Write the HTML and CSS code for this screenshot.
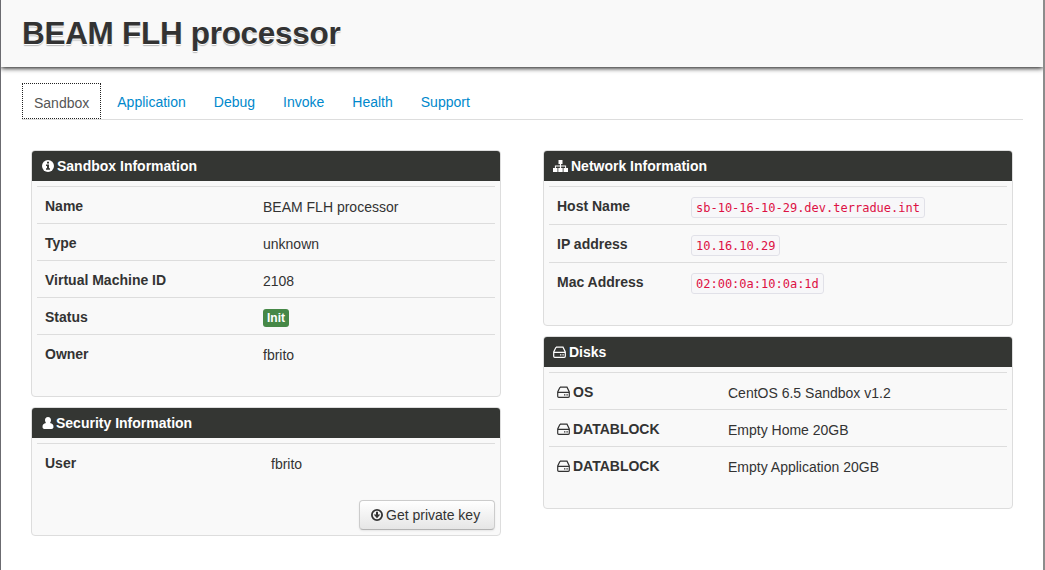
FILE: index.html
```html
<!DOCTYPE html>
<html lang="en">
<head>
<meta charset="utf-8">
<title>BEAM FLH processor</title>
<link rel="stylesheet" href="styles.css">
</head>
<body>
<svg class="sprite" aria-hidden="true">
  <symbol id="hdd" viewBox="0 0 13 12"><path d="M3 1.2h7L12.3 6v4.3a1 1 0 0 1-1 1H1.7a1 1 0 0 1-1-1V6L3 1.2M.9 6.3h11.2" fill="none" stroke="currentColor" stroke-width="1.2"/><path d="M7 8.2h1.4v1.4H7zM9.4 8.2h1.4v1.4H9.4z" fill="currentColor"/></symbol>
</svg>
<div class="page">
  <header class="header"><h1 class="title"><span class="t-title">BEAM FLH processor</span></h1></header>
  <main class="content">
    <nav class="tabs">
      <a class="tab active">Sandbox</a><a class="tab">Application</a><a class="tab">Debug</a><a class="tab">Invoke</a><a class="tab">Health</a><a class="tab">Support</a>
    </nav>
    <div class="columns">
      <div class="column">
        <section class="panel sandbox">
          <h2 class="panel-head"><svg class="icon info" viewBox="0 0 12 12"><circle cx="6" cy="6" r="6" fill="currentColor"/><path d="M5 1.8h2v1.7H5zM4 4.6h3v3.7h1v1.4H4V8.3h1V6H4z" fill="#343633"/></svg>Sandbox Information</h2>
          <dl class="rows">
            <div class="row"><dt>Name</dt><dd>BEAM FLH processor</dd></div>
            <div class="row"><dt>Type</dt><dd>unknown</dd></div>
            <div class="row"><dt>Virtual Machine ID</dt><dd>2108</dd></div>
            <div class="row"><dt>Status</dt><dd><span class="label">Init</span></dd></div>
            <div class="row"><dt>Owner</dt><dd>fbrito</dd></div>
          </dl>
        </section>
        <section class="panel security">
          <h2 class="panel-head"><svg class="icon user" viewBox="0 0 11 12"><path d="M5.5 0C7.5 0 8.6 1.4 8.5 3.3 8.4 4.6 7.9 5.4 7.5 6 9.8 6.3 11 7.5 11 10c0 1.3-.8 2-2 2H2c-1.2 0-2-.7-2-2 0-2.500 1.200-3.700 3.500-4C3.100 5.400 2.600 4.600 2.500 3.300 2.400 1.400 3.500 0 5.500 0z" fill="currentColor"/></svg>Security Information</h2>
          <dl class="rows"><div class="row"><dt>User</dt><dd>fbrito</dd></div></dl>
          <div class="actions"><button class="button" type="button"><svg class="icon download" viewBox="0 0 12 12"><circle cx="6" cy="6" r="5.1" fill="none" stroke="currentColor" stroke-width="1.800"/><path d="M5 2.700h2V5.500h2.300L6 9.200 2.700 5.500H5z" fill="currentColor"/></svg>Get private key</button></div>
        </section>
      </div>
      <div class="column">
        <section class="panel network">
          <h2 class="panel-head"><svg class="icon sitemap" viewBox="0 0 15 12"><path d="M5.500 0h4v4h-1.400v1.500h5V8H15v4h-4.500V8h1.600V6.500h-4V8h1.600v4H5.300V8h1.600V6.500h-4V8h1.600v4H0V8h1.900V5.500h5V4H5.500z" fill="currentColor"/></svg>Network Information</h2>
          <dl class="rows">
            <div class="row"><dt>Host Name</dt><dd><code>sb-10-16-10-29.dev.terradue.int</code></dd></div>
            <div class="row"><dt>IP address</dt><dd><code>10.16.10.29</code></dd></div>
            <div class="row"><dt>Mac Address</dt><dd><code>02:00:0a:10:0a:1d</code></dd></div>
          </dl>
        </section>
        <section class="panel disks">
          <h2 class="panel-head"><svg class="icon hdd"><use href="#hdd"/></svg>Disks</h2>
          <dl class="rows">
            <div class="row"><dt><svg class="icon hdd"><use href="#hdd"/></svg>OS</dt><dd>CentOS 6.5 Sandbox v1.2</dd></div>
            <div class="row"><dt><svg class="icon hdd"><use href="#hdd"/></svg>DATABLOCK</dt><dd>Empty Home 20GB</dd></div>
            <div class="row"><dt><svg class="icon hdd"><use href="#hdd"/></svg>DATABLOCK</dt><dd>Empty Application 20GB</dd></div>
          </dl>
        </section>
      </div>
    </div>
  </main>
</div>
</body>
</html>
```
FILE: styles.css
```css
* { box-sizing: border-box; }
body {
  margin: 0;
  background: #fff;
  color: #333;
  font: 14px/20px "Liberation Sans", Arial, sans-serif;
}
.sprite { display: none; }
.page {
  height: 570px;
  overflow: hidden;
  border-left: 1px solid #6b6b70;
  border-right: 2px solid #8c8c8c;
}
.header {
  height: 67px;
  padding: 13px 21px;
  background: #f9f9f9;
  box-shadow: 0 1px 5px #000;
}
.title {
  margin: 0;
  font-size: 31.5px;
  line-height: 40px;
  letter-spacing: -.3px;
  text-shadow: 0 1px 0 #fff, 0 2px 1px #bbb;
}
.content { padding: 16px 20px 0 21px; }
.tabs {
  display: flex;
  height: 37px;
  border-bottom: 1px solid #ddd;
}
.tab {
  margin-right: 2px;
  padding: 9px 13px;
  color: #0088cc;
}
.tab.active {
  height: 36px;
  padding: 9px 11px;
  border: 1px dotted #222;
  margin-right: 3px;
  color: #555;
}
.columns {
  display: flex;
  justify-content: space-between;
  padding: 30px 10px 0 9px;
}
.column {
  display: flex;
  flex-direction: column;
  gap: 10px;
  width: 470px;
}
.panel {
  border: 1px solid #ddd;
  border-radius: 4px;
  background: #f9f9f9;
  overflow: hidden;
}
.sandbox { height: 247px; }
.security { height: 129px; }
.network { height: 176px; }
.disks { height: 173px; }
.panel-head {
  display: flex;
  align-items: center;
  height: 30px;
  margin: 0;
  padding: 0 9px;
  background: #343633;
  color: #fff;
  font-size: 14px;
  line-height: 30px;
}
.icon { flex: none; margin-right: 3px; }
.info, .download { width: 12px; height: 12px; }
.panel-head .info { margin-left: 1px; }
.user { width: 12px; height: 12px; margin-left: 1px; margin-right: 2px; }
.sitemap { width: 15px; height: 12px; }
.hdd { width: 13px; height: 12px; }
.rows { margin: 5px 5px 0; }
.row {
  display: flex;
  height: 37px;
  padding: 9px 8px;
  border-top: 1px solid #ddd;
}
.row dt {
  display: flex;
  align-items: center;
  height: 20px;
  width: 218px;
  font-weight: bold;
}
.row dd { margin: 1px 0 0; }
.security dt { width: 226px; }
.network .row { height: 38px; }
.network dt { width: 134px; }
.disks dt { width: 171px; }
.network .row, .disks .row { padding-left: 8px; }
.label {
  display: block;
  height: 18px;
  margin-top: 1px;
  padding: 0 4px;
  border-radius: 3px;
  background: #468847;
  color: #fff;
  font-size: 12px;
  font-weight: bold;
  line-height: 19px;
}
code {
  display: block;
  height: 21px;
  padding: 1px 4px;
  border: 1px solid #e1e1e8;
  border-radius: 3px;
  background: #f7f7f9;
  color: #dd1144;
  font: 12px/19px "DejaVu Sans Mono", monospace;
}
.actions {
  display: flex;
  justify-content: flex-end;
  padding: 20px 5px 0;
}
.button {
  display: flex;
  align-items: center;
  width: 136px;
  height: 30px;
  padding: 0 11px;
  border: 1px solid #ccc;
  border-bottom-color: #b3b3b3;
  border-radius: 4px;
  background: linear-gradient(#fff, #e6e6e6);
  box-shadow: 0 1px 2px rgba(0, 0, 0, .08);
  color: #333;
  font: 14px/20px "Liberation Sans", Arial, sans-serif;
  white-space: nowrap;
}
```
